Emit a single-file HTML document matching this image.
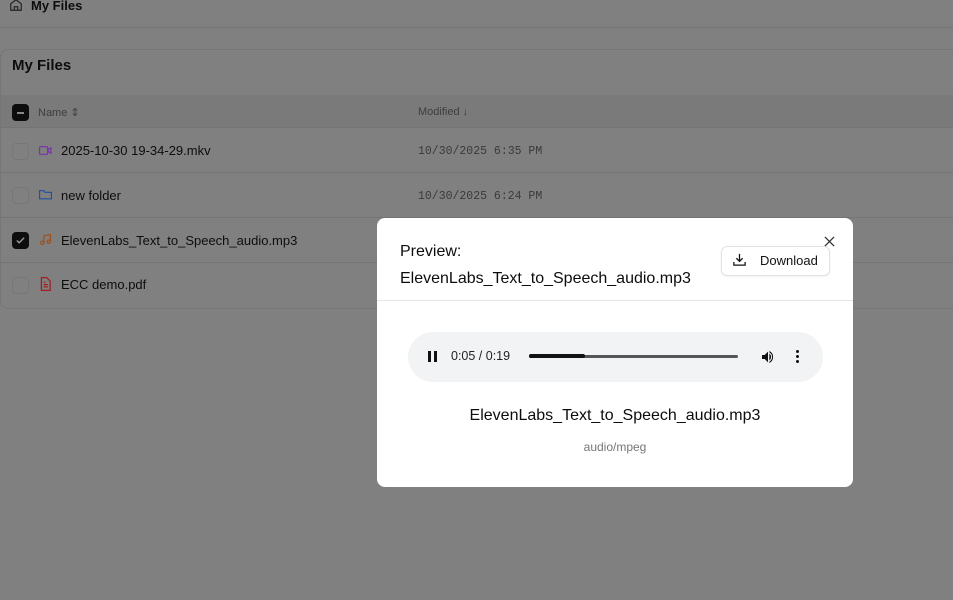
<!DOCTYPE html>
<html><head><style>
body{margin:0;width:953px;height:600px;background:#808080;font-family:"Liberation Sans",sans-serif;position:relative;overflow:hidden;color:#111}
.a{position:absolute}
.line{position:absolute;left:0;right:0;height:1px;background:#747474}
.cb{position:absolute;left:12px;width:15px;height:15px;border:1px solid #777;border-radius:4px;background:#808080}
.cbd{background:#0d0d0d;border-color:#0d0d0d}
.nm{position:absolute;left:61px;font-size:13px;color:#0d0d0d}
.dt{position:absolute;left:418px;font-family:"Liberation Mono",monospace;font-size:11.5px;color:#3a3a3a}
</style></head><body>
<svg class="a" style="left:9px;top:-2px" width="14" height="14" viewBox="0 0 24 24" fill="none" stroke="#222" stroke-width="2"><path d="M3 10l9-7 9 7v11H3z M9 21v-6h6v6"/></svg>
<div class="a" style="left:31px;top:-2px;font-size:13px;font-weight:bold;color:#0d0d0d">My Files</div>
<div class="line" style="top:27px"></div>
<div class="a" style="left:0;right:-10px;top:49px;height:258px;border:1px solid #767676;border-radius:8px"></div>
<div class="a" style="left:12px;top:57px;font-size:15px;font-weight:bold;color:#0d0d0d">My Files</div>
<div class="a" style="left:1px;right:0;top:95px;height:32px;background:#7a7a7a"></div>
<div class="cb cbd" style="top:104px"><div class="a" style="left:4px;top:7px;width:7px;height:2px;background:#888"></div></div>
<div class="a" style="left:38px;top:106px;font-size:11px;color:#3d3d3d">Name ⇕</div>
<div class="a" style="left:418px;top:106px;font-size:11px;color:#3d3d3d">Modified ↓</div>
<div class="line" style="top:127px"></div>
<div class="cb" style="top:143px"></div>
<svg class="a" style="left:39px;top:145px" width="13" height="11" viewBox="0 0 24 20" fill="none" stroke="#7a2fb0" stroke-width="2.2"><rect x="1" y="3" width="15" height="14" rx="2"/><path d="M16 9l6-4v10l-6-4"/></svg>
<div class="nm" style="top:143px">2025-10-30 19-34-29.mkv</div>
<div class="dt" style="top:145px">10/30/2025 6:35 PM</div>
<div class="line" style="top:172px"></div>
<div class="cb" style="top:187px"></div>
<svg class="a" style="left:39px;top:189px" width="13" height="11" viewBox="0 0 24 20" fill="none" stroke="#1f4fa0" stroke-width="2.2"><path d="M1 3h8l2 3h12v12H1z"/></svg>
<div class="nm" style="top:188px">new folder</div>
<div class="dt" style="top:190px">10/30/2025 6:24 PM</div>
<div class="line" style="top:217px"></div>
<div class="cb cbd" style="top:232px"><svg class="a" style="left:2px;top:2px" width="11" height="11" viewBox="0 0 24 24" fill="none" stroke="#999" stroke-width="3"><path d="M4 12l5 5L20 6"/></svg></div>
<svg class="a" style="left:39px;top:233px" width="13" height="13" viewBox="0 0 24 24" fill="none" stroke="#a0501a" stroke-width="2.2"><path d="M9 18V5l12-2v13"/><circle cx="6" cy="18" r="3"/><circle cx="18" cy="16" r="3"/></svg>
<div class="nm" style="top:233px">ElevenLabs_Text_to_Speech_audio.mp3</div>
<div class="line" style="top:262px"></div>
<div class="cb" style="top:277px"></div>
<svg class="a" style="left:39px;top:277px" width="13" height="14" viewBox="0 0 20 24" fill="none" stroke="#a02020" stroke-width="2.2"><path d="M3 1h9l6 6v16H3z M7 13h7 M7 17h7 M7 9h3"/></svg>
<div class="nm" style="top:277px">ECC demo.pdf</div>

<div class="a" style="left:377px;top:218px;width:476px;height:269px;background:#fff;border-radius:8px">
<div class="a" style="left:23px;top:20px;font-size:16px;line-height:27px;color:#0d0d0d">Preview:<br>ElevenLabs_Text_to_Speech_audio.mp3</div>
<div class="a" style="left:344px;top:28px;width:107px;height:28px;border:1px solid #e2e2e2;border-radius:6px;box-shadow:0 1px 2px rgba(0,0,0,.06)"></div>
<svg class="a" style="left:355px;top:34px" width="15" height="15" viewBox="0 0 24 24" fill="none" stroke="#111" stroke-width="2"><path d="M12 3v12M7 10l5 5 5-5M3 16v5h18v-5"/></svg>
<div class="a" style="left:383px;top:35px;font-size:13px;color:#111">Download</div>
<svg class="a" style="left:447px;top:18px" width="11" height="11" viewBox="0 0 12 12" stroke="#333" stroke-width="1.4"><path d="M1 1l10 10M11 1L1 11"/></svg>
<div class="a" style="left:0;right:0;top:82px;height:1px;background:#e6e6e6"></div>
<div class="a" style="left:31px;top:114px;width:415px;height:50px;background:#f1f3f4;border-radius:25px"></div>
<div class="a" style="left:51px;top:133px;width:3px;height:11px;background:#111"></div>
<div class="a" style="left:57px;top:133px;width:3px;height:11px;background:#111"></div>
<div class="a" style="left:74px;top:131px;font-size:12.5px;color:#222">0:05 / 0:19</div>
<div class="a" style="left:152px;top:137px;width:209px;height:3px;background:#555;border-radius:2px"></div>
<div class="a" style="left:152px;top:136px;width:56px;height:4px;background:#111;border-radius:2px"></div>
<svg class="a" style="left:383px;top:131px" width="16" height="16" viewBox="0 0 24 24" fill="#111"><path d="M3 9v6h4l5 5V4L7 9z M14 7a6 6 0 0 1 0 10zM14 3v2a8 8 0 0 1 0 14v2a10 10 0 0 0 0-18z"/></svg>
<div class="a" style="left:419px;top:132px;width:3px;height:3px;border-radius:50%;background:#111;box-shadow:0 5px 0 #111,0 10px 0 #111"></div>
<div class="a" style="left:0;right:0;top:189px;text-align:center;font-size:16px;color:#0d0d0d">ElevenLabs_Text_to_Speech_audio.mp3</div>
<div class="a" style="left:0;right:0;top:222px;text-align:center;font-size:12px;color:#777">audio/mpeg</div>
</div>
</body></html>
